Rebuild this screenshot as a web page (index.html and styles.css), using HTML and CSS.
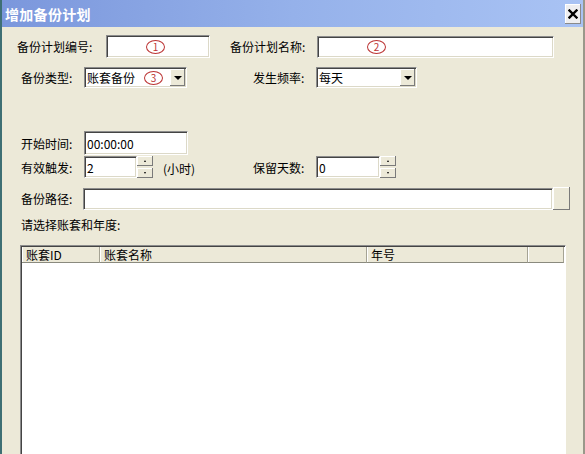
FILE: index.html
```html
<!DOCTYPE html>
<html lang="zh-CN">
<head>
    <meta charset="UTF-8">
    <title>增加备份计划</title>
    <link rel="stylesheet" href="styles.css">
</head>
<body>

    <div class="window">
        <div class="titlebar">
            <span class="title">增加备份计划</span>
            <span class="close-btn">
                <svg width="10" height="10" viewBox="0 0 10 10">
                    <path d="M1.5 1.5 L8.5 8.5 M8.5 1.5 L1.5 8.5" stroke="#000" stroke-width="2.4" stroke-linecap="square"/>
                </svg>
            </span>
        </div>

        <div class="client">
            <!-- plan number / plan name -->
            <div class="row row-plan">
                <span class="lbl lbl-code">备份计划编号:</span>
                <div class="field code-field"><span class="mark">1</span></div>
                <span class="lbl lbl-name">备份计划名称:</span>
                <div class="field name-field"><span class="mark">2</span></div>
            </div>

            <!-- type / frequency -->
            <div class="row row-type">
                <span class="lbl lbl-short">备份类型:</span>
                <div class="field combo type-combo">
                    <span class="combo-text">账套备份</span>
                    <span class="mark mark-3">3</span>
                    <span class="combo-btn"><i class="arrow-down"></i></span>
                </div>
                <span class="lbl lbl-short lbl-right">发生频率:</span>
                <div class="field combo freq-combo">
                    <span class="combo-text">每天</span>
                    <span class="combo-btn"><i class="arrow-down"></i></span>
                </div>
            </div>

            <!-- start time -->
            <div class="row row-time">
                <span class="lbl lbl-short">开始时间:</span>
                <div class="field time-field">00:00:00</div>
            </div>

            <!-- trigger / keep days -->
            <div class="row row-spin">
                <span class="lbl lbl-short">有效触发:</span>
                <div class="field spin-field">2</div>
                <div class="spin">
                    <span class="spin-btn"><i class="arrow-up-sm"></i></span>
                    <span class="spin-btn"><i class="arrow-down-sm"></i></span>
                </div>
                <span class="unit">(小时)</span>
                <span class="lbl lbl-short">保留天数:</span>
                <div class="field spin-field days-field">0</div>
                <div class="spin">
                    <span class="spin-btn"><i class="arrow-up-sm"></i></span>
                    <span class="spin-btn"><i class="arrow-down-sm"></i></span>
                </div>
            </div>

            <!-- path -->
            <div class="row row-path">
                <span class="lbl lbl-path">备份路径:</span>
                <div class="field path-field"></div>
                <span class="browse-btn"></span>
            </div>

            <div class="hint">请选择账套和年度:</div>

            <div class="list">
                <div class="list-head">
                    <span class="col col-id">账套ID</span>
                    <span class="col col-name">账套名称</span>
                    <span class="col col-year">年号</span>
                    <span class="col col-rest"></span>
                </div>
            </div>
        </div>
    </div>

</body>
</html>
```

FILE: styles.css
```css
body {
    margin: 0;
    padding: 0;
    font-family: "Noto Sans CJK SC", "DejaVu Sans", sans-serif;
    font-size: 12px;
    color: #000;
    background: #ece9d8;
}
.window {
    width: 585px;
    height: 454px;
    box-sizing: border-box;
    overflow: hidden;
    border-left: 2px solid #3e6f74;
    border-right: 2px solid #9a988a;
    background: #ece9d8;
}
.titlebar {
    height: 27px;
    display: flex;
    align-items: center;
    justify-content: space-between;
    background: linear-gradient(to right, #7b97dc, #95b1ea 50%, #a9c3f4);
}
.title {
    color: #fff;
    font-size: 14px;
    font-weight: bold;
    padding-left: 3px;
    letter-spacing: 0.3px;
}
.close-btn {
    width: 16px;
    height: 20px;
    margin-right: 2px;
    margin-top: 1px;
    background: #eeeef0;
    box-shadow: inset -1px -1px 0 #8a8a8a, inset 1px 1px 0 #fff;
    display: flex;
    align-items: center;
    justify-content: center;
}
.client {
    padding-top: 8px;
}
.row {
    display: flex;
    align-items: center;
}
.lbl {
    white-space: nowrap;
}
.field {
    box-sizing: border-box;
    background: #fff;
    border-top: 1px solid #8c8c8c;
    border-left: 1px solid #8c8c8c;
    border-right: 1px solid #fff;
    border-bottom: 1px solid #fff;
    box-shadow: inset 1px 1px 0 #444, inset -1px -1px 0 #dcd9c8;
    padding-left: 3px;
    display: flex;
    align-items: center;
}
.mark {
    box-sizing: border-box;
    width: 19px;
    height: 14px;
    border: 1px solid #b33;
    border-radius: 50%;
    color: #b33;
    font-size: 10px;
    line-height: 12px;
    text-align: center;
}

/* row 1 */
.row-plan {
    height: 23px;
    padding-left: 15px;
}
.lbl-code { width: 89px; }
.code-field {
    width: 104px;
    height: 23px;
    padding-left: 39px;
}
.lbl-name {
    width: 87px;
    margin-left: 20px;
}
.name-field {
    width: 237px;
    height: 22px;
    padding-left: 49px;
}

/* row 2 */
.row-type {
    height: 21px;
    margin-top: 9px;
    padding-left: 19px;
}
.lbl-short { width: 63px; }
.lbl-right { margin-left: 66px; }
.combo {
    height: 21px;
    padding-left: 2px;
}
.type-combo { width: 103px; }
.freq-combo { width: 101px; }
.combo-text {
    flex: 1;
}
.type-combo .combo-text {
    flex: none;
}
.mark-3 {
    margin-left: 9px;
    margin-top: 1px;
}
.combo-btn {
    width: 15px;
    height: 17px;
    margin-left: auto;
    margin-right: 1px;
    background: #ece9d8;
    box-shadow: inset -1px -1px 0 #7a7a7a, inset 1px 1px 0 #fff;
    display: flex;
    align-items: center;
    justify-content: center;
}
.arrow-down {
    width: 0;
    height: 0;
    border-left: 4px solid transparent;
    border-right: 4px solid transparent;
    border-top: 4px solid #000;
}

/* row 3 */
.row-time {
    height: 24px;
    margin-top: 43px;
    padding-left: 19px;
}
.time-field {
    width: 104px;
    height: 24px;
    padding-left: 2px;
}

/* row 4 */
.row-spin {
    height: 22px;
    margin-top: 1px;
    padding-left: 19px;
}
.spin-field {
    width: 53px;
    height: 22px;
    padding-left: 2px;
}
.days-field {
    width: 64px;
}
.spin {
    width: 16px;
    height: 22px;
    display: flex;
    flex-direction: column;
    justify-content: space-between;
}
.spin-btn {
    height: 10px;
    background: #ece9d8;
    box-shadow: inset -1px -1px 0 #7a7a7a, inset 1px 1px 0 #fff;
    display: flex;
    align-items: center;
    justify-content: center;
}
.arrow-up-sm {
    width: 0;
    height: 0;
    border-left: 1.5px solid transparent;
    border-right: 1.5px solid transparent;
    border-bottom: 2px solid #000;
}
.arrow-down-sm {
    width: 0;
    height: 0;
    border-left: 1.5px solid transparent;
    border-right: 1.5px solid transparent;
    border-top: 2px solid #000;
}
.unit {
    width: 90px;
    margin-left: 10px;
    margin-top: 3px;
}

/* row 5 */
.row-path {
    height: 23px;
    margin-top: 9px;
    padding-left: 19px;
}
.lbl-path { width: 62px; }
.path-field {
    width: 470px;
    height: 22px;
}
.browse-btn {
    width: 17px;
    height: 23px;
    box-sizing: border-box;
    background: #ece9d8;
    box-shadow: inset -1px -1px 0 #7a7a7a, inset 1px 1px 0 #fff;
}

.hint {
    padding-left: 19px;
    margin-top: 7px;
    line-height: 16px;
}

/* account list */
.list {
    width: 546px;
    height: 230px;
    box-sizing: border-box;
    margin-top: 12px;
    margin-left: 18px;
    background: #fff;
    border-top: 1px solid #8c8c8c;
    border-left: 1px solid #8c8c8c;
    border-right: 1px solid #fff;
    box-shadow: inset 1px 1px 0 #444;
    padding: 1px 0 0 1px;
}
.list-head {
    display: flex;
    height: 16px;
}
.col {
    box-sizing: border-box;
    height: 16px;
    line-height: 15px;
    padding-left: 4px;
    background: #ece9d8;
    border-bottom: 1px solid #8a8a7e;
    border-right: 1px solid #a5a394;
    box-shadow: inset 1px 0 0 #fff;
}
.col-id { width: 78px; }
.col-name { width: 267px; }
.col-year { width: 161px; }
.col-rest { width: 36px; }
```
